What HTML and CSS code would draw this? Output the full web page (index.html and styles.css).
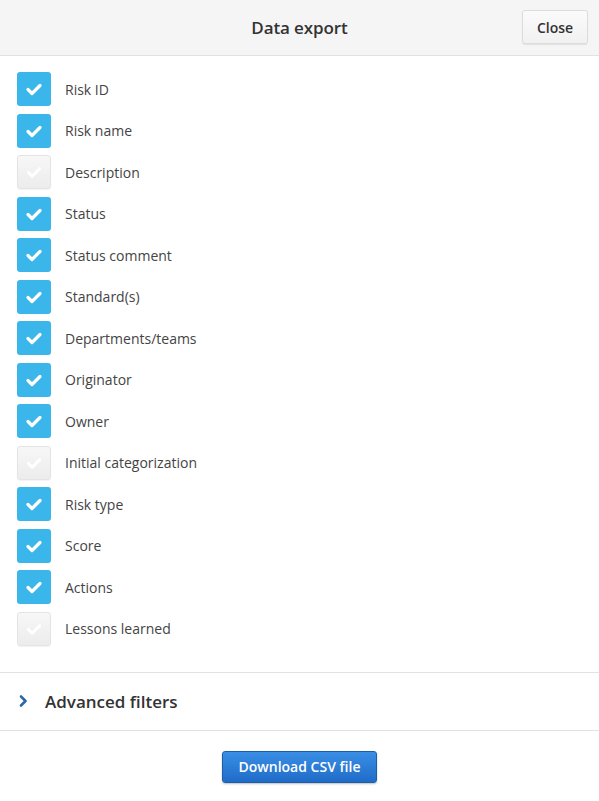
FILE: index.html
```html
<!DOCTYPE html>
<html>
<head>
<meta charset="utf-8">
<link rel="stylesheet" href="styles.css">
</head>
<body>
<div class="modal">
  <header class="header">
    <h1 class="title">Data export</h1>
    <button class="close">Close</button>
  </header>
  <ul class="list">
    <li class="row"><span class="box on"><svg viewBox="0 0 34 34"><path d="M11 17.5l4 4 8-8"/></svg></span><span class="label">Risk ID</span></li>
    <li class="row"><span class="box on"><svg viewBox="0 0 34 34"><path d="M11 17.5l4 4 8-8"/></svg></span><span class="label">Risk name</span></li>
    <li class="row"><span class="box off"><svg viewBox="0 0 34 34"><path d="M11 17.5l4 4 8-8"/></svg></span><span class="label">Description</span></li>
    <li class="row"><span class="box on"><svg viewBox="0 0 34 34"><path d="M11 17.5l4 4 8-8"/></svg></span><span class="label">Status</span></li>
    <li class="row"><span class="box on"><svg viewBox="0 0 34 34"><path d="M11 17.5l4 4 8-8"/></svg></span><span class="label">Status comment</span></li>
    <li class="row"><span class="box on"><svg viewBox="0 0 34 34"><path d="M11 17.5l4 4 8-8"/></svg></span><span class="label">Standard(s)</span></li>
    <li class="row"><span class="box on"><svg viewBox="0 0 34 34"><path d="M11 17.5l4 4 8-8"/></svg></span><span class="label">Departments/teams</span></li>
    <li class="row"><span class="box on"><svg viewBox="0 0 34 34"><path d="M11 17.5l4 4 8-8"/></svg></span><span class="label">Originator</span></li>
    <li class="row"><span class="box on"><svg viewBox="0 0 34 34"><path d="M11 17.5l4 4 8-8"/></svg></span><span class="label">Owner</span></li>
    <li class="row"><span class="box off"><svg viewBox="0 0 34 34"><path d="M11 17.5l4 4 8-8"/></svg></span><span class="label">Initial categorization</span></li>
    <li class="row"><span class="box on"><svg viewBox="0 0 34 34"><path d="M11 17.5l4 4 8-8"/></svg></span><span class="label">Risk type</span></li>
    <li class="row"><span class="box on"><svg viewBox="0 0 34 34"><path d="M11 17.5l4 4 8-8"/></svg></span><span class="label">Score</span></li>
    <li class="row"><span class="box on"><svg viewBox="0 0 34 34"><path d="M11 17.5l4 4 8-8"/></svg></span><span class="label">Actions</span></li>
    <li class="row"><span class="box off"><svg viewBox="0 0 34 34"><path d="M11 17.5l4 4 8-8"/></svg></span><span class="label">Lessons learned</span></li>
  </ul>
  <div class="advanced">
    <svg class="chev" viewBox="0 0 10 14"><path d="M3 2.5l4.5 4.5-4.5 4.5"/></svg>
    <span class="adv-label">Advanced filters</span>
  </div>
  <footer class="footer">
    <button class="download">Download CSV file</button>
  </footer>
</div>
</body>
</html>
```
FILE: styles.css
```css
* { box-sizing: border-box; }
html, body { margin: 0; padding: 0; background: #fff; }
body { font-family: "Open Sans", "Noto Sans", sans-serif; color: #333; }
.modal { width: 599px; height: 801px; display: flex; flex-direction: column; }
.header {
  height: 56px;
  background: #f5f5f5;
  border-bottom: 1px solid #e2e2e2;
  display: flex;
  align-items: center;
  justify-content: center;
  position: relative;
}
.title { margin: 0; font-size: 17px; font-weight: 600; color: #333; letter-spacing: -0.1px; }
.close {
  position: absolute;
  right: 11px;
  top: 10px;
  width: 66px;
  height: 34px;
  border: 1px solid #dcdcdc;
  border-radius: 3px;
  background: linear-gradient(#fbfbfb, #f1f1f1);
  box-shadow: 0 1px 1px rgba(0,0,0,0.08);
  font-family: inherit;
  font-size: 14px;
  font-weight: 600;
  color: #333;
  padding: 0;
}
.list {
  list-style: none;
  margin: 0;
  padding: 16px 0 26px 17px;
  display: flex;
  flex-direction: column;
  gap: 7.5px;
  border-bottom: 1px solid #e2e2e2;
}
.row { display: flex; align-items: center; height: 34px; }
.box {
  width: 34px;
  height: 34px;
  border-radius: 3px;
  display: flex;
  align-items: center;
  justify-content: center;
  flex: none;
}
.box svg { width: 34px; height: 34px; }
.box path { fill: none; stroke-width: 3.2; stroke-linecap: round; stroke-linejoin: round; }
.box.on { background: #3bb6ea; }
.box.on path { stroke: #fff; }
.box.off { background: linear-gradient(#f7f7f7, #ececec); border: 1px solid #e4e4e4; box-shadow: 0 1px 1px rgba(0,0,0,0.05); }
.box.off path { stroke: #fff; }
.label { margin-left: 14px; font-size: 14px; color: #444; }
.advanced {
  height: 58px;
  display: flex;
  align-items: center;
  padding-left: 18px;
  border-bottom: 1px solid #e2e2e2;
}
.chev { width: 10px; height: 14px; }
.chev path { fill: none; stroke: #2a6aa8; stroke-width: 2.6; stroke-linecap: round; stroke-linejoin: round; }
.adv-label { margin-left: 17px; font-size: 17px; font-weight: 600; color: #333; }
.footer { flex: 1; display: flex; justify-content: center; padding-top: 20px; }
.download {
  width: 155px;
  height: 32px;
  border: 1px solid #1d5ea8;
  border-radius: 3px;
  background: linear-gradient(#3a8ee4, #1f6cc8);
  box-shadow: 0 1px 2px rgba(0,0,0,0.25);
  color: #fff;
  font-family: inherit;
  font-size: 14px;
  font-weight: 600;
  padding: 0;
}
```
